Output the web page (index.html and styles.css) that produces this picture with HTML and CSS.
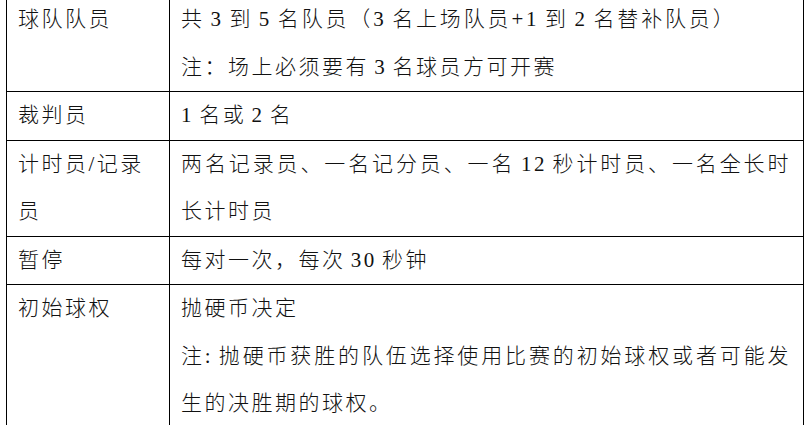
FILE: index.html
```html
<!DOCTYPE html>
<html lang="zh-CN">
<head>
<meta charset="utf-8">
<link rel="stylesheet" href="styles.css">
</head>
<body>
<table class="rules">
  <tr>
    <td class="label">球队队员</td>
    <td class="value"><span class="wide">共 3 到 5 名队员（3 名上场队员+1 到 2 名替补队员）</span><br>注：场上必须要有 3 名球员方可开赛</td>
  </tr>
  <tr>
    <td class="label">裁判员</td>
    <td class="value">1 名或 2 名</td>
  </tr>
  <tr>
    <td class="label">计时员/记录<br>员</td>
    <td class="value"><span class="jline">两名记录员、一名记分员、一名 12 秒计时员、一名全长时</span>长计时员</td>
  </tr>
  <tr>
    <td class="label">暂停</td>
    <td class="value">每对一次，每次 30 秒钟</td>
  </tr>
  <tr>
    <td class="label">初始球权</td>
    <td class="value">抛硬币决定<br><span class="jline">注: 抛硬币获胜的队伍选择使用比赛的初始球权或者可能发</span>生的决胜期的球权。</td>
  </tr>
</table>
</body>
</html>
```

FILE: styles.css
```css
html, body {
  margin: 0;
  padding: 0;
  background: #ffffff;
}

body {
  overflow: hidden;
}

.rules {
  border-collapse: collapse;
  margin: -5px 0 0 6px;
  width: 798px;
  font-family: "Liberation Serif", "Noto Sans CJK SC", serif;
  font-weight: 300;
  font-size: 21px;
  letter-spacing: 2.5px;
  word-spacing: -2.5px;
  color: #111111;
}

.rules td {
  border: 1px solid #000000;
  vertical-align: top;
  line-height: 47.5px;
  padding: 0 12px 0 11px;
  white-space: nowrap;
}

.rules .label {
  width: 139px;
}

.wide {
  letter-spacing: 2.85px;
}

.jline {
  display: block;
  text-align: justify;
  text-align-last: justify;
  text-justify: inter-character;
}
```
